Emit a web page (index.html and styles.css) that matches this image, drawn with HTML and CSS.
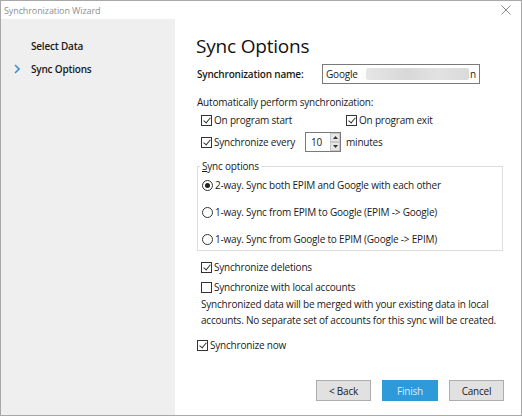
FILE: index.html
```html
<!DOCTYPE html>
<html>
<head>
<meta charset="utf-8">
<link rel="stylesheet" href="styles.css">
</head>
<body>
<div class="window">
  <div class="titlebar">
    <span class="title">Synchronization Wizard</span>
    <svg class="close" width="10" height="10" viewBox="0 0 10 10"><path d="M0.5 0.5 L9.5 9.5 M9.5 0.5 L0.5 9.5" stroke="#8a8a8a" stroke-width="1" fill="none"/></svg>
  </div>
  <div class="body">
    <div class="sidebar">
      <div class="step">Select Data</div>
      <div class="step current">
        <svg class="chev" width="6" height="10" viewBox="0 0 6 10"><path d="M1 1 L5 5 L1 9" stroke="#3d8fd8" stroke-width="1.6" fill="none"/></svg>
        Sync Options
      </div>
    </div>
    <div class="main">
      <h1 class="heading">Sync Options</h1>
      <div class="name-row">
        <span class="label-bold">Synchronization name:</span>
        <div class="textbox">Google<span class="blur"></span><span class="tail">n</span></div>
      </div>
      <div class="auto-label">Automatically perform synchronization:</div>
      <div class="auto-grid">
        <div class="chk-row"><span class="cb checked"></span>On program start</div>
        <div class="chk-row"><span class="cb checked"></span>On program exit</div>
      </div>
      <div class="every-row">
        <div class="chk-row every"><span class="cb checked"></span>Synchronize every</div>
        <div class="spinner">
          <span class="spin-val">10</span>
          <span class="spin-btns">
            <span class="spin-btn"><svg width="5" height="3" viewBox="0 0 5 3"><path d="M0 3 L2.5 0 L5 3Z" fill="#333"/></svg></span>
            <span class="spin-btn"><svg width="5" height="3" viewBox="0 0 5 3"><path d="M0 0 L2.5 3 L5 0Z" fill="#333"/></svg></span>
          </span>
        </div>
        <span class="minutes">minutes</span>
      </div>
      <fieldset class="group">
        <legend class="legend"><u>S</u>ync options</legend>
        <div class="radio-row"><span class="rb on"></span>2-way. Sync both EPIM and Google with each other</div>
        <div class="radio-row"><span class="rb"></span>1-way. Sync from EPIM to Google (EPIM -&gt; Google)</div>
        <div class="radio-row"><span class="rb"></span>1-way. Sync from Google to EPIM (Google -&gt; EPIM)</div>
      </fieldset>
      <div class="extra">
        <div class="chk-row"><span class="cb checked"></span>Synchronize deletions</div>
        <div class="chk-row local"><span class="cb"></span>Synchronize with local accounts</div>
        <p class="note">Synchronized data will be merged with your existing data in local accounts. No separate set of accounts for this sync will be created.</p>
      </div>
      <div class="chk-row now"><span class="cb checked"></span>Synchronize now</div>
      <div class="buttons">
        <button class="btn">&lt; Back</button>
        <button class="btn primary">Finish</button>
        <button class="btn">Cancel</button>
      </div>
    </div>
  </div>
</div>
</body>
</html>
```
FILE: styles.css
```css
* { box-sizing: border-box; }
html, body { margin: 0; padding: 0; background: #fff; }
body {
  font-family: "Segoe UI", "Open Sans", "Noto Sans", sans-serif;
  font-size: 10px;
  letter-spacing: -0.2px;
  color: #1a1a1a;
}
.window {
  width: 522px;
  height: 416px;
  border: 1px solid #a8a8a8;
  display: flex;
  flex-direction: column;
  background: #fff;
}
.titlebar {
  height: 18px;
  flex: none;
  display: flex;
  align-items: center;
  justify-content: space-between;
  padding: 0 10px 0 3px;
}
.title { color: #8f8f8f; font-size: 9px; letter-spacing: -0.1px; }
.close { display: block; }
.body { flex: 1; display: flex; min-height: 0; }
.sidebar {
  width: 174px;
  flex: none;
  background: #efefef;
  padding-top: 19px;
}
.step {
  position: relative;
  padding-left: 30px;
  font-weight: 600;
  height: 23px;
  line-height: 16px;
}
.chev { position: absolute; left: 13px; top: 3px; }
.main {
  flex: 1;
  padding: 14px 17px 0 21px;
  display: flex;
  flex-direction: column;
}
.heading {
  margin: 0;
  font-size: 19px;
  font-weight: 400;
  line-height: 26px;
  letter-spacing: -0.2px;
  color: #111;
}
.name-row {
  display: flex;
  align-items: center;
  margin-top: 5px;
  height: 20px;
}
.label-bold { font-weight: 600; width: 126px; padding-left: 1px; }
.textbox {
  width: 158px;
  height: 20px;
  border: 1px solid #7a7a7a;
  padding: 0 3px;
  display: flex;
  align-items: center;
}
.blur {
  flex: 1;
  height: 12px;
  margin-left: 8px;
  background: linear-gradient(90deg, #e6e6e6, #d8d8d8 40%, #e2e2e2 70%, #dadada);
  border-radius: 2px;
}
.tail { margin-left: 1px; }
.auto-label { margin-top: 10px; line-height: 16px; padding-left: 1px; }
.auto-grid {
  display: grid;
  grid-template-columns: 145px auto;
  margin-top: 2px;
  padding-left: 5px;
}
.chk-row {
  display: flex;
  align-items: center;
  height: 16px;
}
.cb {
  width: 11px;
  height: 11px;
  border: 1px solid #333;
  margin-right: 2px;
  position: relative;
  flex: none;
}
.cb.checked::after {
  content: "";
  position: absolute;
  left: 3px;
  top: 0px;
  width: 3px;
  height: 6px;
  border-right: 1px solid #333;
  border-bottom: 1px solid #333;
  transform: rotate(40deg);
}
.every-row {
  display: flex;
  align-items: center;
  margin-top: 4px;
  padding-left: 5px;
  height: 20px;
}
.chk-row.every { width: 104px; }
.spinner {
  width: 36px;
  height: 20px;
  border: 1px solid #7a7a7a;
  display: flex;
  margin-right: 5px;
}
.spin-val { flex: 1; padding-left: 5px; line-height: 18px; }
.spin-btns { width: 10px; display: flex; flex-direction: column; }
.spin-btn {
  flex: 1;
  background: #e6e6e6;
  display: flex;
  align-items: center;
  justify-content: center;
  border: 1px solid #c8c8c8;
}
.group {
  margin: 7px 0 0 1px;
  border: 1px solid #dcdcdc;
  padding: 4px 4px 3px 4px;
  width: 306px;
  min-width: 0;
}
.legend {
  padding: 0 2px;
  margin-left: -2px;
  line-height: 14px;
}
.radio-row {
  display: flex;
  align-items: center;
  height: 16px;
  margin-top: 11px;
}
.radio-row:first-of-type { margin-top: 0; }
.rb {
  width: 11px;
  height: 11px;
  border-radius: 50%;
  border: 1px solid #333;
  margin-right: 2px;
  position: relative;
  flex: none;
}
.rb.on::after {
  content: "";
  position: absolute;
  left: 2px;
  top: 2px;
  width: 5px;
  height: 5px;
  border-radius: 50%;
  background: #222;
}
.extra { padding-left: 5px; margin-top: 8px; }
.local { margin-top: 4px; }
.note {
  margin: 1px 0 0 0;
  line-height: 16px;
  width: 300px;
}
.now { margin-top: 9px; padding-left: 1px; }
.buttons {
  display: flex;
  justify-content: flex-end;
  gap: 11px;
  margin-top: 27px;
}
.btn {
  width: 55px;
  height: 21px;
  border: 1px solid #adadad;
  background: #e1e1e1;
  font-family: inherit;
  font-size: 10px;
  letter-spacing: -0.2px;
  color: #1a1a1a;
  padding: 0;
}
.btn.primary {
  width: 56px;
  background: #2f9ad9;
  border-color: #2f9ad9;
  color: #d8ecf8;
}
```
